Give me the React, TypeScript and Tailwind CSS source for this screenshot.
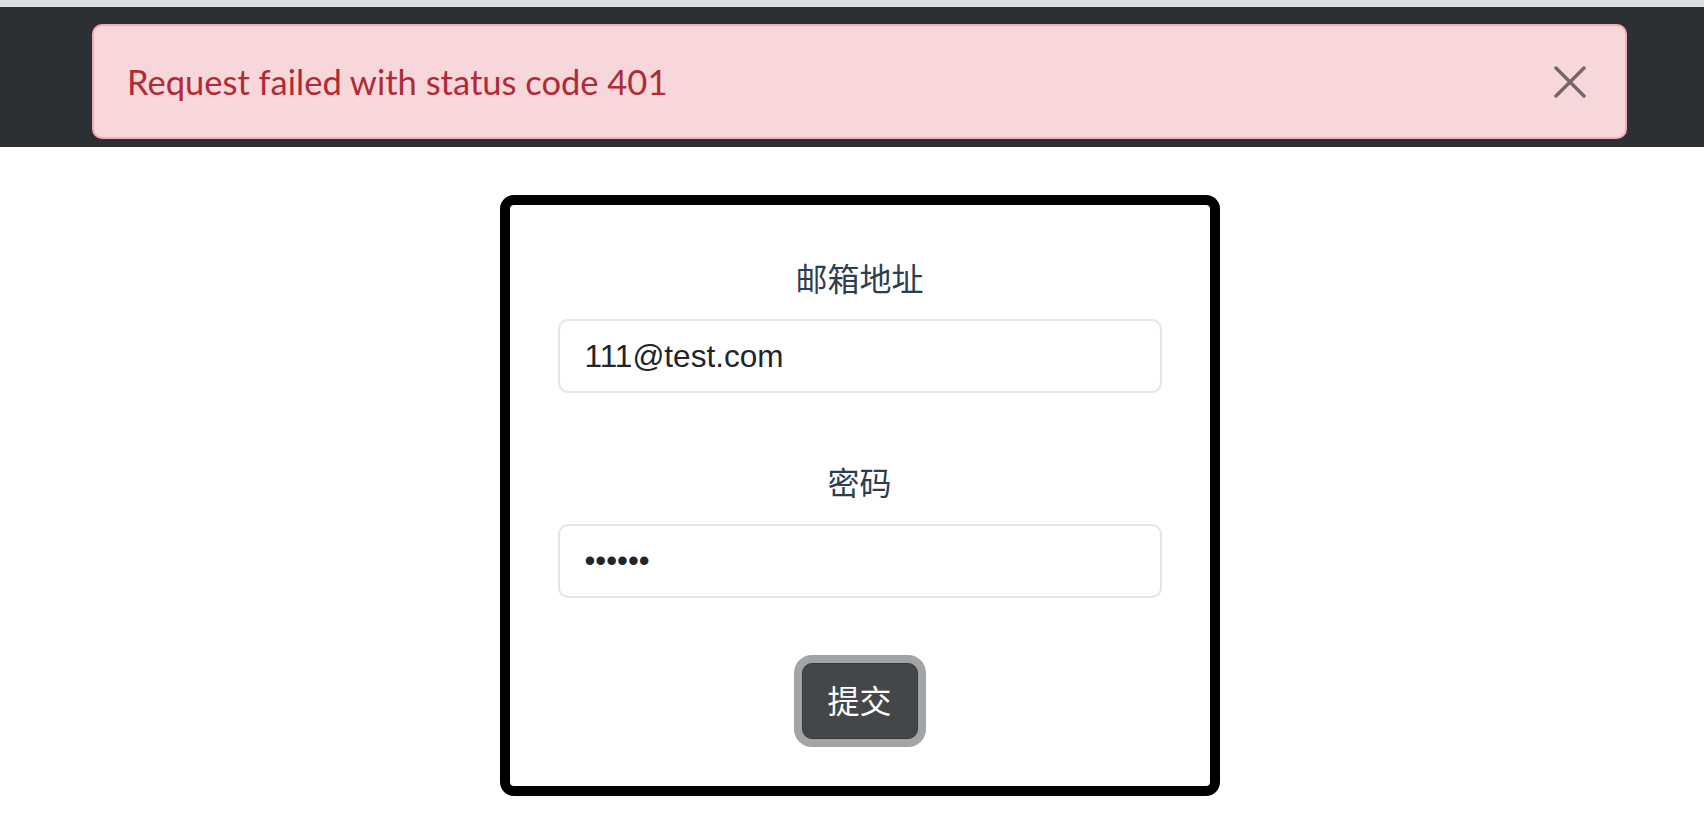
export default function App() {
  return (
    <div className="min-h-screen bg-white font-['Liberation_Sans','Noto_Sans_CJK_SC',sans-serif]">
      {/* strip above the navbar */}
      <div className="h-[7px] bg-[#dcdedf]" />

      <nav className="h-[140px] bg-[#2c3034] pt-[17px]">
        <div
          role="alert"
          className="ml-[92px] flex h-[115px] w-[1535px] items-center justify-between rounded-[10px] border-2 border-[#f1aeb5] bg-[#f8d7da] pl-[33px] pr-[39px]"
        >
          <span className="font-['Lato','Noto_Sans',sans-serif] text-[34.5px] text-[#b02a37]">
            Request failed with status code 401
          </span>
          <button type="button" aria-label="Close" className="text-[#736668]">
            <svg width="32" height="32" viewBox="0 0 32 32" fill="none" stroke="currentColor" strokeWidth="3.4" strokeLinecap="round">
              <path d="M2 2L30 30M30 2L2 30" />
            </svg>
          </button>
        </div>
      </nav>

      <div className="flex justify-center pl-[15px] pt-[48px]">
        <form className="w-[720px] rounded-[14px] border-[10px] border-black bg-white px-[48px] pb-[47px] pt-[54px]">
          <label className="mb-[24px] block text-center text-[32px] leading-[36px] text-[#2c3e50] font-['Noto_Sans_CJK_SC',sans-serif]">
            邮箱地址
          </label>
          <input
            type="email"
            readOnly
            value="111@test.com"
            className="block h-[74px] w-full rounded-[10px] border-2 border-[#e3e5e8] px-[25px] text-[31.5px] text-[#212529] outline-none"
          />

          <label className="mt-[70px] mb-[25px] block text-center text-[32px] leading-[36px] text-[#2c3e50] font-['Noto_Sans_CJK_SC',sans-serif]">
            密码
          </label>
          <input
            type="password"
            readOnly
            value="111111"
            className="block h-[74px] w-full rounded-[10px] border-2 border-[#e3e5e8] px-[25px] text-[31px] text-[#212529] outline-none"
          />

          <div className="mt-[65px] flex justify-center">
            <button
              type="submit"
              className="h-[76px] w-[116px] rounded-[10px] border border-[#363a3d] bg-[#43474a] pb-[4px] text-[32px] text-white shadow-[0_0_0_8px_#a3a4a6] font-['Noto_Sans_CJK_SC',sans-serif]"
            >
              提交
            </button>
          </div>
        </form>
      </div>
    </div>
  )
}
